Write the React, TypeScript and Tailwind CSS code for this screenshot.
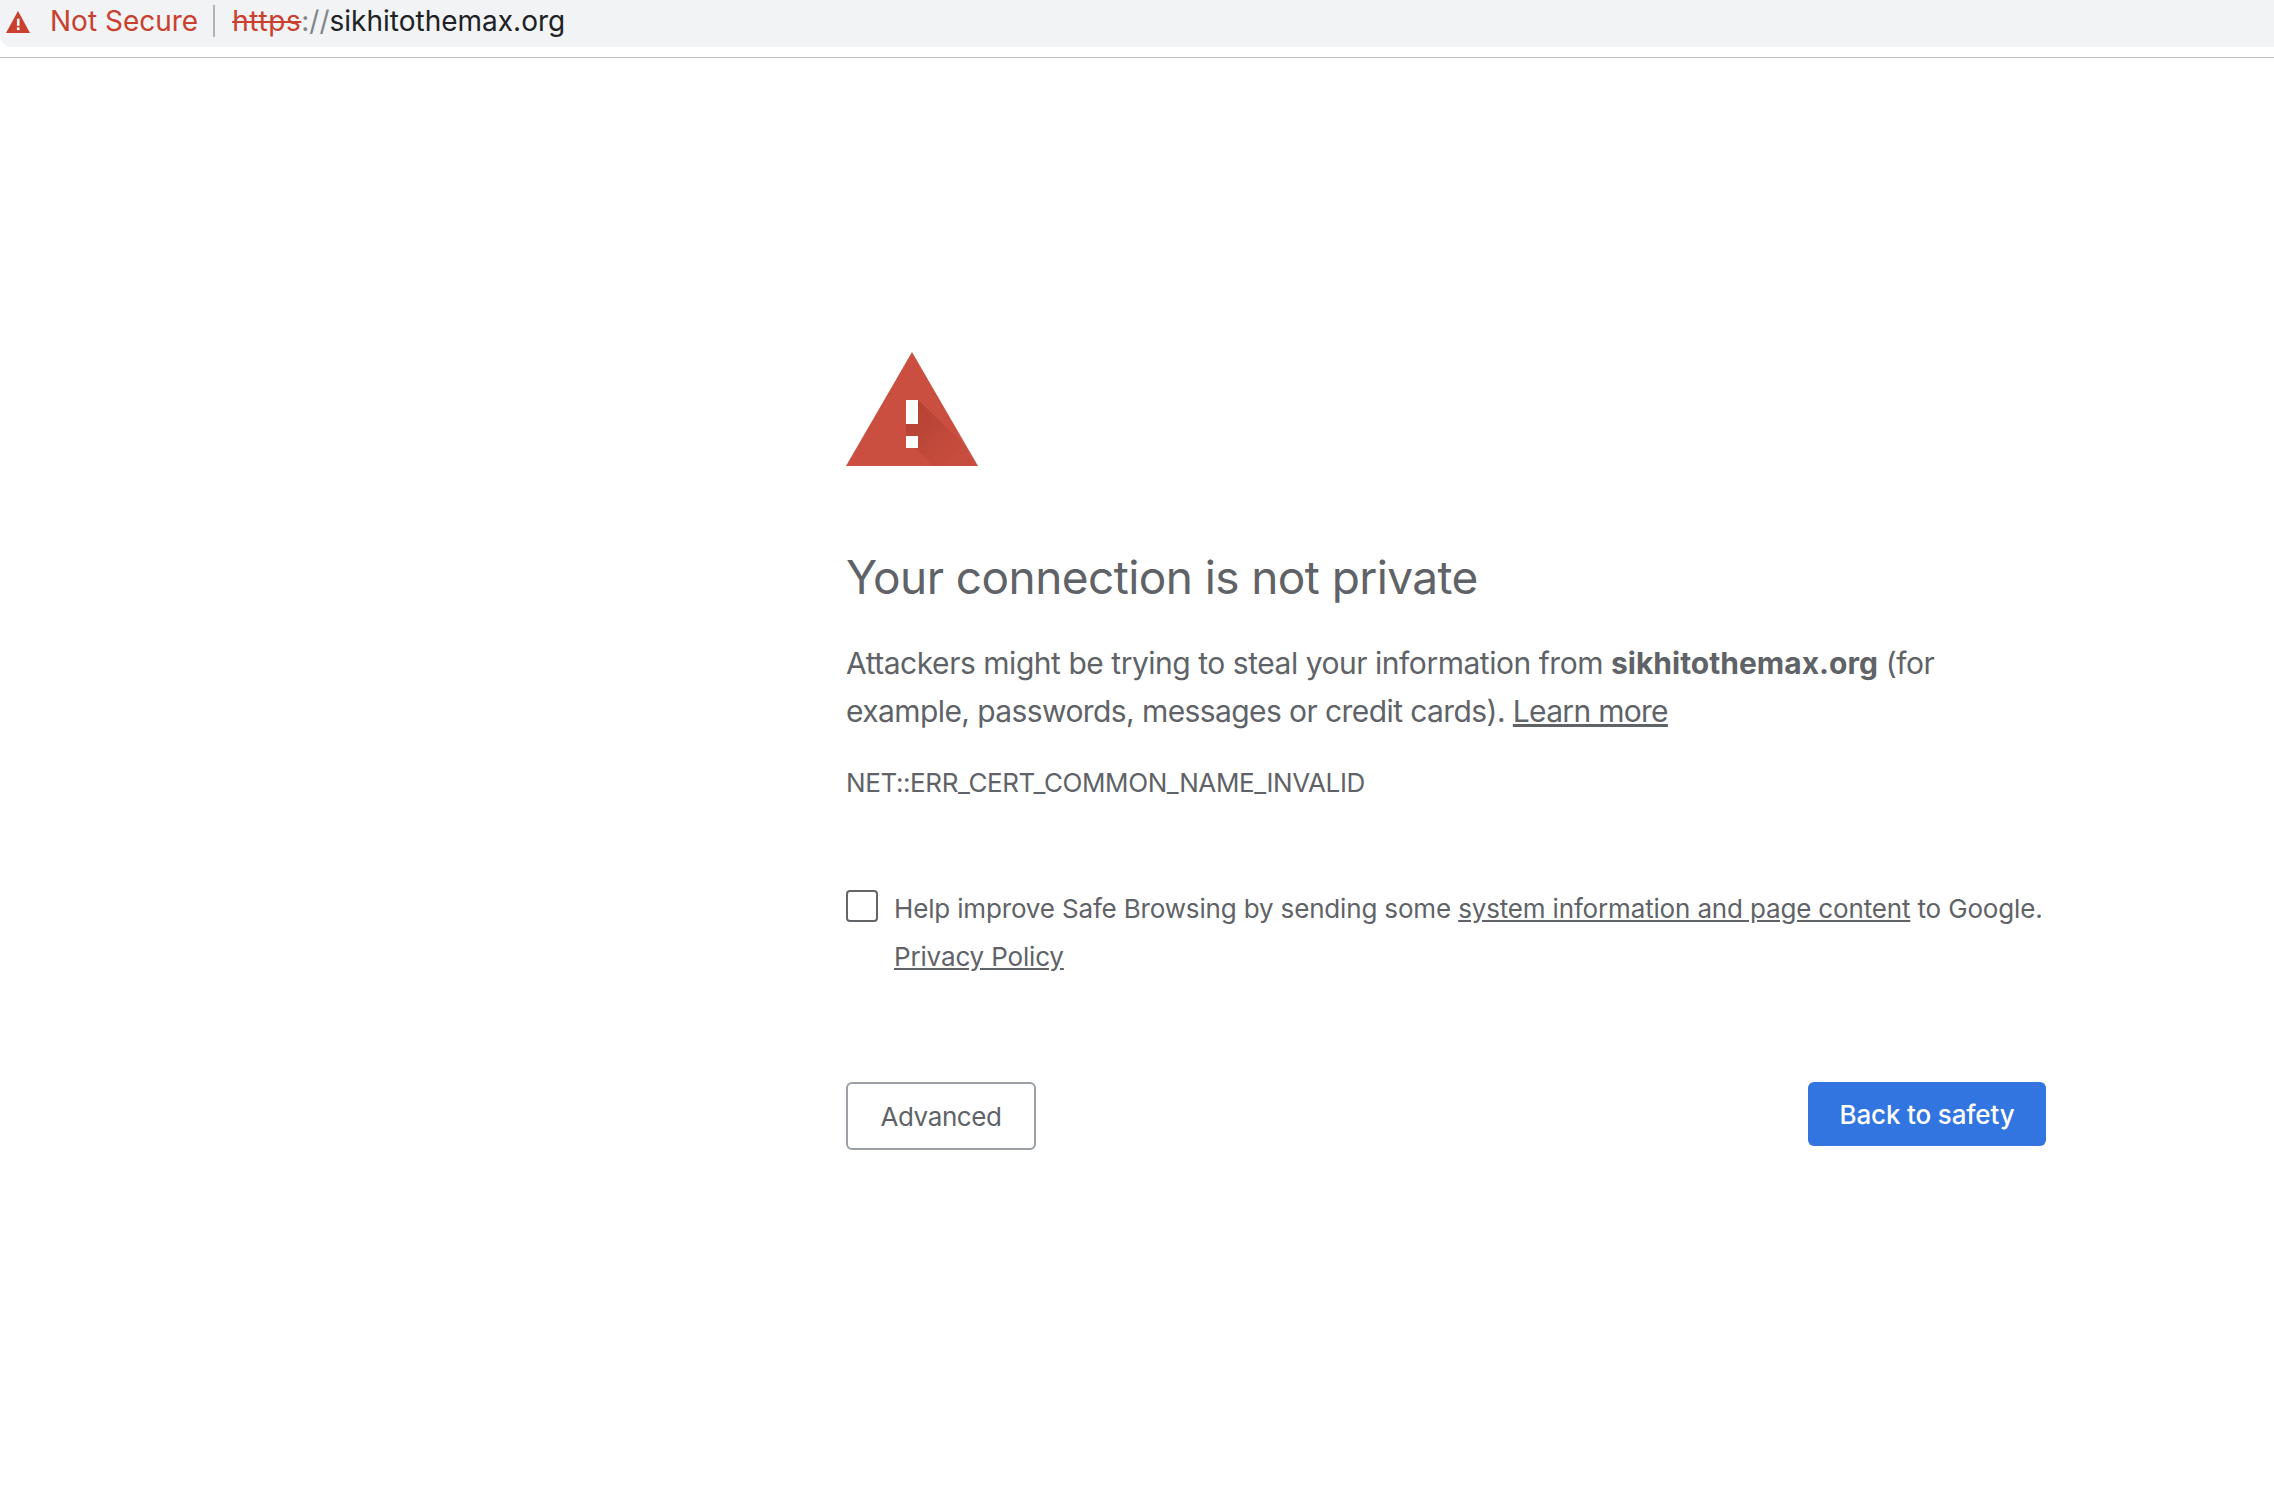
import React from "react";

const AddressBar = () => (
  <div className="h-[58px] border-b border-b-[#bdbdbd]">
    <div className="flex items-center h-[47px] pl-[6px] pb-[6px] bg-[#f1f3f4] rounded-bl-xl text-[28px] leading-none">
      <svg width="24" height="22" viewBox="0 0 22 20" className="mt-[2px]">
        <path d="M11 0 L22 20 L0 20 Z" fill="#c9402f" />
        <rect x="10" y="7" width="2.4" height="6.5" fill="#fff" />
        <rect x="10" y="15" width="2.4" height="2.4" fill="#fff" />
      </svg>
      <span className="ml-[20px] text-[#c9402f]">Not Secure</span>
      <div className="w-[2px] h-[32px] ml-[15px] bg-[#b0b3b7]" />
      <span className="ml-[17px] text-[#c9402f] line-through tracking-[0.6px]">https</span>
      <span className="text-[#80868b]">://</span>
      <span className="text-[#202124]">sikhitothemax.org</span>
    </div>
  </div>
);

const WarningIcon = () => (
  <svg width="132" height="114" viewBox="0 0 132 114" className="block">
    <defs>
      <linearGradient id="markShadow" x1="66" y1="60" x2="110" y2="104" gradientUnits="userSpaceOnUse">
        <stop offset="0" stopColor="#a83c2e" stopOpacity="0.65" />
        <stop offset="1" stopColor="#a83c2e" stopOpacity="0.12" />
      </linearGradient>
    </defs>
    <path d="M66 0 L132 114 L0 114 Z" fill="#cb4f40" />
    <path d="M72 48 L115 89 L129 114 L88 114 L60 88 L60 72 Z" fill="url(#markShadow)" />
    <rect x="60" y="48" width="12" height="24" fill="#fff" />
    <rect x="60" y="84" width="12" height="12" fill="#fff" />
  </svg>
);

export default function App() {
  return (
    <div className="min-h-[1494px] bg-white font-['Inter',sans-serif] text-[#5f6368]">
      <AddressBar />
      <main className="w-[1200px] ml-[846px] pt-[294px]">
        <WarningIcon />
        <h1 className="mt-[83px] text-[46px] leading-[56px] font-normal tracking-[-0.58px]">
          Your connection is not private
        </h1>
        <p className="mt-[34px] text-[30px] leading-[48px] tracking-[-0.47px]">
          Attackers might be trying to steal your information from{" "}
          <strong className="font-bold tracking-normal">sikhitothemax.org</strong> (for{" "}
          <span className="tracking-[-0.59px]">
            example, passwords, messages or credit cards).{" "}
          </span>
          <a className="underline tracking-[-0.7px]">Learn more</a>
        </p>
        <div className="mt-[32px] text-[26px] leading-[32px] tracking-[-0.4px]">
          NET::ERR_CERT_COMMON_NAME_INVALID
        </div>
        <div className="flex mt-[90px]">
          <div className="w-[32px] h-[32px] mt-[1px] shrink-0 border-2 border-[#636669] rounded-[4px]" />
          <p className="ml-[16px] text-[26px] leading-[48px] -mt-[4px] tracking-[-0.16px]">
            <span className="whitespace-nowrap">
              Help improve Safe Browsing by sending some{" "}
              <a className="underline">system information and page content</a> to
              Google.
            </span>
            <br />
            <a className="underline">Privacy Policy</a>
          </p>
        </div>
        <div className="flex justify-between items-start mt-[101px]">
          <button className="w-[190px] h-[68px] border-2 border-[#9aa0a6] rounded-[6px] text-[26px] tracking-[-0.4px] bg-white">
            Advanced
          </button>
          <button className="w-[238px] h-[64px] rounded-[6px] bg-[#3275e0] text-white text-[26px] tracking-[-0.15px] font-medium">
            Back to safety
          </button>
        </div>
      </main>
    </div>
  );
}
